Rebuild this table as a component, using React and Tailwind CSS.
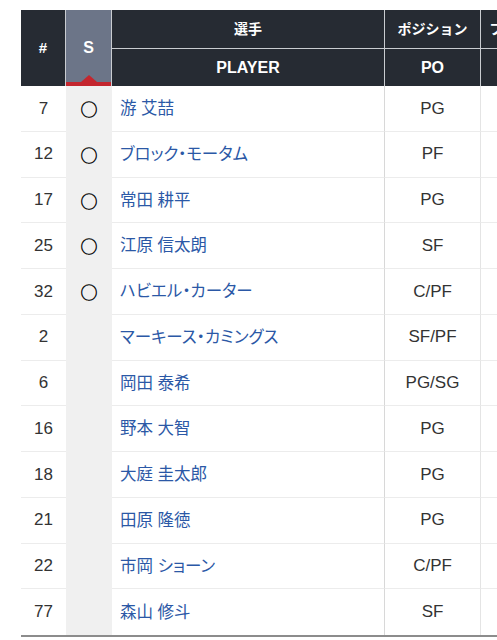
const players = [
  { no: 7, starter: true, name: '游 艾喆', pos: 'PG' },
  { no: 12, starter: true, name: 'ブロック・モータム', pos: 'PF' },
  { no: 17, starter: true, name: '常田 耕平', pos: 'PG' },
  { no: 25, starter: true, name: '江原 信太朗', pos: 'SF' },
  { no: 32, starter: true, name: 'ハビエル・カーター', pos: 'C/PF' },
  { no: 2, starter: false, name: 'マーキース・カミングス', pos: 'SF/PF' },
  { no: 6, starter: false, name: '岡田 泰希', pos: 'PG/SG' },
  { no: 16, starter: false, name: '野本 大智', pos: 'PG' },
  { no: 18, starter: false, name: '大庭 圭太郎', pos: 'PG' },
  { no: 21, starter: false, name: '田原 隆徳', pos: 'PG' },
  { no: 22, starter: false, name: '市岡 ショーン', pos: 'C/PF' },
  { no: 77, starter: false, name: '森山 修斗', pos: 'SF' },
]

function PlayerRow({ p, last }) {
  const line = last ? '' : 'border-b border-[#ececec]'
  return (
    <div className="flex h-[45.75px]">
      <div className={`w-[45px] shrink-0 flex items-center justify-center text-[17px] text-[#333] ${line}`}>
        {p.no}
      </div>
      <div className="w-[46px] shrink-0 flex items-center justify-center bg-[#f0f0f0] font-['Noto_Sans_CJK_JP',sans-serif] text-[17px] text-black [-webkit-text-stroke:0.4px_#000]">
        {p.starter ? '○' : ''}
      </div>
      <div className={`w-[273px] shrink-0 flex items-center pl-2 border-r border-r-[#d8d8d8] text-[16.5px] text-[#2b58a6] [font-feature-settings:'palt'] ${line}`}>
        {p.name}
      </div>
      <div className={`w-[96px] shrink-0 flex items-center justify-center border-r border-r-[#e4e4e4] text-[17px] text-[#333] ${line}`}>
        {p.pos}
      </div>
      <div className={`w-[128px] shrink-0 ${line}`} />
    </div>
  )
}

export default function App() {
  return (
    <div className="w-full min-h-[640px] bg-white overflow-hidden font-['Liberation_Sans','Noto_Sans_CJK_JP',sans-serif]">
      <div className="ml-[21px] mt-[10px] w-max">
        {/* ヘッダー */}
        <div className="flex h-[76px] text-white font-bold">
          <div className="w-[45px] shrink-0 flex items-center justify-center bg-[#262b33] border-r border-[#c9ccd1] text-[15px]">
            #
          </div>
          <div className="relative w-[46px] shrink-0 flex items-center justify-center bg-[#6c7588] border-r border-[#c9ccd1] text-[16px]">
            S
            <div className="absolute bottom-[4px] left-1/2 -translate-x-1/2 w-0 h-0 border-x-[8px] border-x-transparent border-b-[7px] border-b-[#c4262e]" />
            <div className="absolute bottom-0 left-0 right-0 h-[4px] bg-[#c4262e]" />
          </div>
          <div className="flex flex-col">
            <div className="flex h-[39px] border-b border-[#c9ccd1] text-[14px]">
              <div className="w-[273px] flex items-center justify-center bg-[#262b33] border-r border-[#c9ccd1]">選手</div>
              <div className="w-[96px] flex items-center justify-center bg-[#262b33] border-r border-[#c9ccd1]">ポジション</div>
              <div className="w-[128px] flex items-center justify-center bg-[#262b33]">フィールドゴール</div>
            </div>
            <div className="flex h-[37px] text-[16px]">
              <div className="w-[273px] flex items-center justify-center bg-[#262b33] border-r border-[#c9ccd1]">PLAYER</div>
              <div className="w-[96px] flex items-center justify-center bg-[#262b33] border-r border-[#c9ccd1]">PO</div>
              <div className="w-[128px] flex items-center justify-center bg-[#262b33]">FG</div>
            </div>
          </div>
        </div>

        {/* 選手一覧 */}
        <div className="border-b-2 border-[#8c8c8c]">
          {players.map((p, i) => (
            <PlayerRow key={p.no} p={p} last={i === players.length - 1} />
          ))}
        </div>
      </div>
    </div>
  )
}
